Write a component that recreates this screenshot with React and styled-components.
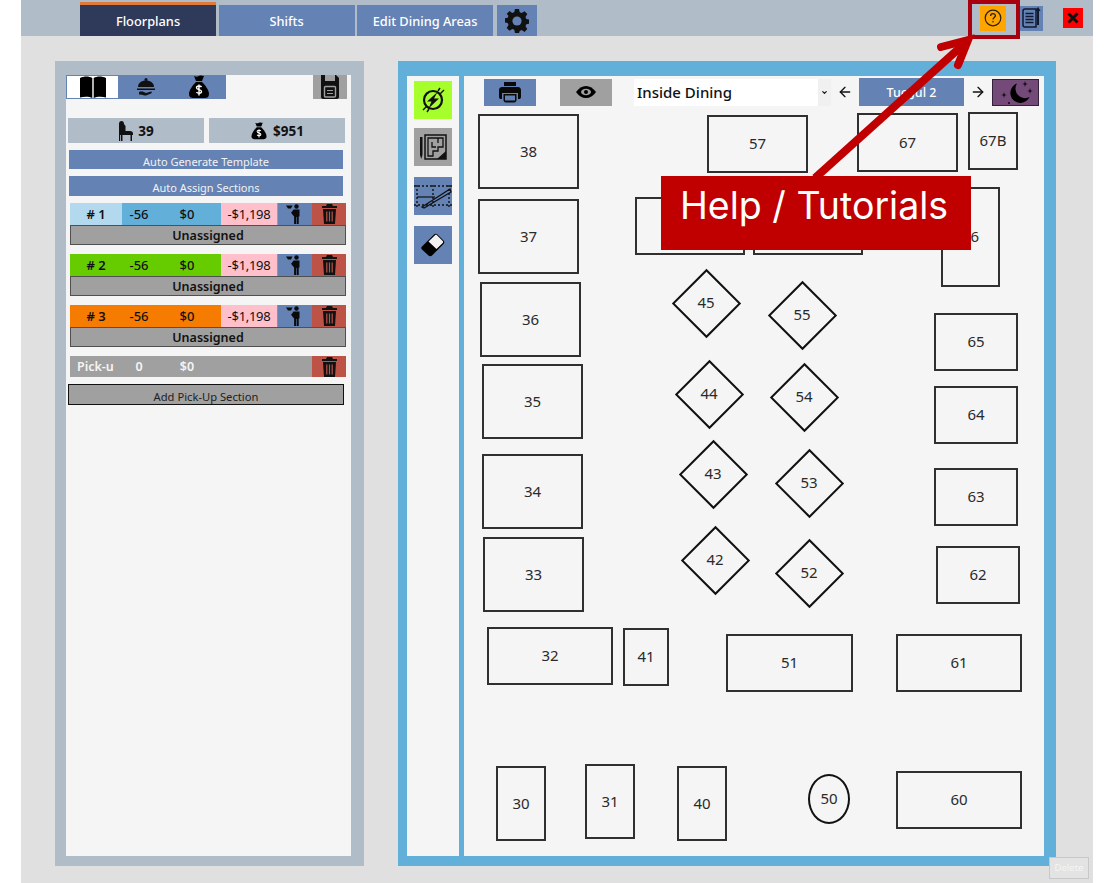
import styled, { createGlobalStyle } from "styled-components";
import { ArrowLeft, ArrowRight, ChevronDown } from "lucide-react";

const GlobalStyle = createGlobalStyle`
    html, body { margin: 0; background: #ffffff; }
    body { font-family: "Noto Sans", "Open Sans", sans-serif; }
`;

const rectTables = [
    { n: "38", x: 14, y: 38, w: 101, h: 75 },
    { n: "37", x: 14, y: 123, w: 101, h: 75 },
    { n: "36", x: 16, y: 206, w: 101, h: 75 },
    { n: "35", x: 18, y: 288, w: 101, h: 75 },
    { n: "34", x: 18, y: 378, w: 101, h: 75 },
    { n: "33", x: 19, y: 461, w: 101, h: 75 },
    { n: "32", x: 23, y: 551, w: 126, h: 58 },
    { n: "41", x: 159, y: 552, w: 46, h: 58 },
    { n: "57", x: 243, y: 39, w: 101, h: 58 },
    { n: "67", x: 393, y: 37, w: 101, h: 59 },
    { n: "67B", x: 504, y: 36, w: 50, h: 58 },
    { n: "", x: 171, y: 121, w: 110, h: 58 },
    { n: "", x: 289, y: 121, w: 110, h: 58 },
    { n: "66", x: 477, y: 111, w: 59, h: 100 },
    { n: "65", x: 470, y: 237, w: 84, h: 58 },
    { n: "64", x: 470, y: 310, w: 84, h: 58 },
    { n: "63", x: 470, y: 392, w: 84, h: 58 },
    { n: "62", x: 472, y: 470, w: 84, h: 58 },
    { n: "61", x: 432, y: 558, w: 126, h: 58 },
    { n: "60", x: 432, y: 695, w: 126, h: 58 },
    { n: "51", x: 262, y: 558, w: 127, h: 58 },
    { n: "30", x: 32, y: 690, w: 50, h: 75 },
    { n: "31", x: 121, y: 688, w: 50, h: 75 },
    { n: "40", x: 213, y: 690, w: 50, h: 75 },
];

const diamonds = [
    { n: "45", x: 242, y: 227 },
    { n: "55", x: 338, y: 239 },
    { n: "44", x: 245, y: 318 },
    { n: "54", x: 340, y: 321 },
    { n: "43", x: 249, y: 398 },
    { n: "53", x: 345, y: 407 },
    { n: "42", x: 251, y: 484 },
    { n: "52", x: 345, y: 497 },
];

const sections = [
    { n: "# 1", tag: "#b3d9ee", bg: "#62afd9" },
    { n: "# 2", tag: "#66cc00", bg: "#66cc00" },
    { n: "# 3", tag: "#f57c00", bg: "#f57c00" },
];

function Book() {
    return (
        <svg width="26" height="22" viewBox="0 0 26 22">
            <path d="M0 2c4-2 9-2 12.300 0v20c-3-1.500-8-1.500-12.300-.5zM13.700 2c3.300-2 8.300-2 12.300 0v19.500c-4-1-9-1-12.300.5z" fill="#000" />
        </svg>
    );
}

function Cloche() {
    return (
        <svg width="20" height="20" viewBox="0 0 20 20">
            <circle cx="10" cy="2.500" r="1.500" fill="#111" />
            <path d="M2 10c0-4 3.500-6.500 8-6.500s8 2.500 8 6.500z" fill="#111" />
            <path d="M1 11.500h18v1.500H1z" fill="#111" />
            <path d="M3 15c3-1 5 0 7 1l5-1.500c1 0 1 1.500 0 2L10 18.500c-3 0-4-1.500-7-1z" fill="#111" />
        </svg>
    );
}

function MoneyBag({ size = 24 }) {
    return (
        <svg width={size} height={size} viewBox="0 0 24 24">
            <path d="M7 1c2 1 3 1 5 0s3 0 5 0l-2 5H9z" fill="#000" />
            <path d="M9 7h6c3 3 7 8 7 12 0 3-2 4-4 4H6c-2 0-4-1-4-4 0-4 4-9 7-12z" fill="#000" />
            <path d="M14.500 12c-1-1.500-5-1.500-5 .8 0 2.500 5 1.200 5 3.700 0 2.200-4 2.200-5 .5M12 9.500v11" fill="none" stroke="#fff" strokeWidth="1.400" />
        </svg>
    );
}

function Floppy() {
    return (
        <svg width="18" height="24" viewBox="0 0 18 24">
            <path d="M0 0h4v6h10V0h1l3 3v19c0 1-1 2-2 2H2c-1 0-2-1-2-2z" fill="#111" />
            <rect x="3.500" y="11.500" width="11" height="10.500" rx="1" fill="none" stroke="#a0a0a0" strokeWidth="1.400" />
            <path d="M6 15.500h6M6 18.500h6" stroke="#a0a0a0" strokeWidth="1.200" />
        </svg>
    );
}

function Chair() {
    return (
        <svg width="15" height="20" viewBox="0 0 15 20">
            <path d="M1 3c0-2 1-3 2.500-3C5 0 6 1 6 3l1.500 2v5H12c2 0 3 1 3 2.500V14h-1v6h-1.500v-6h-8v6H3v-6H2.200v6H1z" fill="#111" />
        </svg>
    );
}

function Waiter() {
    return (
        <svg width="18" height="20" viewBox="0 0 18 20">
            <circle cx="10.500" cy="2.500" r="2.200" fill="#0a0a0a" />
            <path d="M7.500 5.500h6v7h-.8V20h-2v-7h-.6v7h-2v-7.500L5 8.800l1-1z" fill="#0a0a0a" />
            <path d="M0 1.500h6.500L5 4.500H2z" fill="#0a0a0a" />
        </svg>
    );
}

function Trash() {
    return (
        <svg width="15" height="20" viewBox="0 0 15 20">
            <path d="M5 0h5l1 2h4v2H0V2h4z" fill="#111" />
            <path d="M1 5h13l-1 15H2z" fill="#111" />
            <path d="M4.800 7.500v10M7.500 7.500v10M10.200 7.500v10" stroke="#b9534a" strokeWidth="1.200" />
        </svg>
    );
}

function Gear() {
    return (
        <svg width="24" height="26" viewBox="0 0 24 24">
            <path
                d="M10 0h4l.7 3.300 2 .8L19.500 2.300l2.800 2.800-1.800 2.800.8 2 3.300.7v4l-3.300.7-.8 2 1.800 2.800-2.800 2.800-2.800-1.800-2 .8L14 24h-4l-.7-3.300-2-.8-2.800 1.800-2.800-2.800 1.800-2.800-.8-2L-.6 13.400v-4l3.300-.7.8-2L1.700 4.900l2.800-2.800 2.800 1.800 2-.8z"
                fill="#111"
            />
            <circle cx="12" cy="12" r="4.600" fill="#6482b4" />
        </svg>
    );
}

function Bolt() {
    return (
        <svg width="26" height="28" viewBox="0 0 26 28">
            <circle cx="13" cy="14" r="9" fill="none" stroke="#111" strokeWidth="2.200" />
            <path d="M17.500 6L7 15.500h4.500L8.500 22.500l10.500-10h-5z" fill="#111" />
            <path d="M3 24l3.500-3.500M20 8l4-4M20 2l-2 3M7 26l2-3" stroke="#111" strokeWidth="1.400" />
        </svg>
    );
}

function PlanIcon() {
    return (
        <svg width="32" height="32" viewBox="0 0 32 32">
            <path d="M3 6h2.500v18L4.200 28 3 24z" fill="#111" />
            <path d="M8 4h21v24H8z" fill="none" stroke="#111" strokeWidth="1.500" />
            <path d="M11 7h15v9h-5v4h-5v5h-5zM15 11v5h4M21 7v5" fill="none" stroke="#111" strokeWidth="1.300" />
            <path d="M20 28l9-8v8z" fill="#111" />
        </svg>
    );
}

function DrawIcon() {
    return (
        <svg width="38" height="38" viewBox="0 0 38 38" fill="none">
            <path d="M0 9h38M0 28h38M3 8v22M19 8v22M35 8v22" stroke="#111" strokeWidth="1.400" strokeDasharray="2 2" />
            <path d="M3 20h18" stroke="#111" strokeWidth="1.200" />
            <path d="M8 30L36 12l1 3L10 31z" fill="none" stroke="#111" strokeWidth="1.300" />
        </svg>
    );
}

function Eraser() {
    return (
        <svg width="24" height="24" viewBox="0 0 24 24">
            <path d="M1 13.500L13 1.500c1-1 2.500-1 3.500 0l6 6c1 1 1 2.500 0 3.500L11 22.500c-1 1-2.500 1-3.500 0L1 16.500c-1-1-1-2 0-3z" fill="#000" />
            <path d="M7.500 8.500L14 2.300c.7-.6 1.500-.6 2 0l5.700 5.700c.6.6.6 1.300 0 2L15.500 16z" fill="#f2f2f2" />
        </svg>
    );
}

function Printer() {
    return (
        <svg width="22" height="22" viewBox="0 0 22 22">
            <path d="M5 1h12v4H5z" fill="#0a0a0a" />
            <path d="M3 6h16c1.500 0 3 1 3 3v7c0 1.500-1 2-2 2h-1v-6H3v6H2c-1 0-2-.5-2-2V9c0-2 1.500-3 3-3z" fill="#0a0a0a" />
            <path d="M4.500 13h13v6c0 1.500-1 2.500-2.500 2.500H7c-1.500 0-2.500-1-2.500-2.500z" fill="#0a0a0a" />
            <path d="M6 14.500h10v5H6z" fill="#6482b4" />
        </svg>
    );
}

function Eye() {
    return (
        <svg width="20" height="12" viewBox="0 0 20 12">
            <path d="M0 6c3-4 6-6 10-6s7 2 10 6c-3 4-6 6-10 6S3 10 0 6z" fill="#000" />
            <ellipse cx="10" cy="6" rx="5" ry="3.300" fill="#a0a0a0" />
            <circle cx="10" cy="6" r="2" fill="#000" />
        </svg>
    );
}

function Moon() {
    return (
        <svg width="45" height="25" viewBox="0 0 45 25">
            <path d="M24 3.500A10 10 0 1 0 36.500 17 A9.500 9.500 0 0 1 24 3.500z" fill="#000" />
            <path d="M32 1l.6 2.400 2.400.6-2.400.6L32 7l-.6-2.400L29 4l2.400-.6zM37 8l.6 2.400 2.400.6-2.400.6L37 14l-.6-2.400-2.400-.6 2.400-.6zM11 12l.6 2.400 2.400.6-2.400.6L11 18l-.6-2.400L8 15l2.400-.6z" fill="#000" />
            <circle cx="16" cy="23" r=".9" fill="#000" />
        </svg>
    );
}

function Help() {
    return (
        <svg width="18" height="18" viewBox="0 0 18 18" fill="none">
            <circle cx="9" cy="9" r="7.800" stroke="#2a2010" strokeWidth="1.200" />
            <path d="M6.600 7c0-3 4.800-3 4.800-.2 0 1.800-2.400 1.800-2.400 3.700" stroke="#2a2010" strokeWidth="1.300" />
            <circle cx="9" cy="12.800" r=".8" fill="#2a2010" />
        </svg>
    );
}

function Notes() {
    return (
        <svg width="20" height="22" viewBox="0 0 20 22" fill="none">
            <path d="M1 4c0-1 1-2 2-2h11v18H3c-1 0-2-1-2-2z" fill="#6482b4" stroke="#111a30" strokeWidth="1.500" />
            <path d="M3.500 6.500h8M3.500 9.500h8M3.500 12.500h8M3.500 15.500h8" stroke="#111a30" strokeWidth="1.400" />
            <path d="M16 2v16" stroke="#111a30" strokeWidth="2" />
            <path d="M14 4l2-3 2 3" stroke="#111a30" strokeWidth="1.200" />
        </svg>
    );
}

function CloseX() {
    return (
        <svg width="12" height="12" viewBox="0 0 12 12">
            <path d="M1.500 1.500l9 9M10.500 1.500l-9 9" stroke="#111" strokeWidth="3" />
        </svg>
    );
}

export default function App() {
    return (
        <>
            <GlobalStyle />
            <Frame>
                <TopBar>
                    <Tab $active>Floorplans</Tab>
                    <Tab>Shifts</Tab>
                    <Tab>Edit Dining Areas</Tab>
                    <GearTab><Gear /></GearTab>
                    <TopRight>
                        <HelpButton><Help /></HelpButton>
                        <NotesButton><Notes /></NotesButton>
                        <CloseButton><CloseX /></CloseButton>
                    </TopRight>
                </TopBar>

                <Body>
                    <LeftPanel>
                        <LeftInner>
                            <IconTabs>
                                <IconTabGroup>
                                    <BookTab><Book /></BookTab>
                                    <PlainTab><Cloche /></PlainTab>
                                    <PlainTab><MoneyBag /></PlainTab>
                                </IconTabGroup>
                                <SaveButton><Floppy /></SaveButton>
                            </IconTabs>

                            <Stats>
                                <Stat><Chair /> 39</Stat>
                                <Stat><MoneyBag size={18} /> $951</Stat>
                            </Stats>

                            <WideButton>Auto Generate Template</WideButton>
                            <WideButton>Auto Assign Sections</WideButton>

                            {sections.map((s) => (
                                <Section key={s.n}>
                                    <SectionRow $bg={s.bg}>
                                        <SectionTag $bg={s.tag}>{s.n}</SectionTag>
                                        <SectionNum $w={34}>-56</SectionNum>
                                        <SectionNum $w={62}>$0</SectionNum>
                                        <Loss>-$1,198</Loss>
                                        <WaiterButton><Waiter /></WaiterButton>
                                        <TrashButton><Trash /></TrashButton>
                                    </SectionRow>
                                    <Unassigned>Unassigned</Unassigned>
                                </Section>
                            ))}

                            <PickupRow>
                                <PickupName>Pick-u</PickupName>
                                <PickupCell $w={34}>0</PickupCell>
                                <PickupCell $w={62}>$0</PickupCell>
                                <PickupSpacer />
                                <TrashButton><Trash /></TrashButton>
                            </PickupRow>
                            <AddPickup>Add Pick-Up Section</AddPickup>
                        </LeftInner>
                    </LeftPanel>

                    <RightPanel>
                        <ToolColumn>
                            <ToolButton $bg="#a6ff2a"><Bolt /></ToolButton>
                            <ToolButton $bg="#a0a0a0"><PlanIcon /></ToolButton>
                            <ToolButton $bg="#6482b4"><DrawIcon /></ToolButton>
                            <ToolButton $bg="#6482b4"><Eraser /></ToolButton>
                        </ToolColumn>
                        <Canvas>
                            <CanvasBar>
                                <BarButton $bg="#6482b4"><Printer /></BarButton>
                                <BarButton $bg="#a0a0a0" $ml={24}><Eye /></BarButton>
                                <Select>
                                    Inside Dining
                                    <SelectArrow><ChevronDown size={7} strokeWidth={4} /></SelectArrow>
                                </Select>
                                <Arrow><ArrowLeft size={16} /></Arrow>
                                <DateButton>Tue Jul 2</DateButton>
                                <Arrow><ArrowRight size={16} /></Arrow>
                                <NightButton><Moon /></NightButton>
                            </CanvasBar>

                            {rectTables.map((t, i) => (
                                <Table key={i} style={{ left: t.x, top: t.y, width: t.w, height: t.h }}>{t.n}</Table>
                            ))}
                            {diamonds.map((d) => (
                                <DiamondWrap key={d.n} style={{ left: d.x - 35, top: d.y - 35 }}>
                                    <Diamond />
                                    <DiamondLabel>{d.n}</DiamondLabel>
                                </DiamondWrap>
                            ))}
                            <RoundTable>50</RoundTable>
                        </Canvas>
                    </RightPanel>
                </Body>

                <DeleteButton>Delete</DeleteButton>

                <Callout>Help / Tutorials</Callout>
                <HelpBox />
                <ArrowOverlay width="1114" height="883" viewBox="0 0 1114 883">
                    <path d="M815 178L964 44" stroke="#c00000" strokeWidth="8" fill="none" />
                    <path d="M941 47L968 40 958 65" stroke="#c00000" strokeWidth="8" fill="none" strokeLinecap="round" />
                </ArrowOverlay>
            </Frame>
        </>
    );
}

const Frame = styled.div`
    position: relative;
    width: 1072px;
    height: 883px;
    margin-left: 21px;
    background: #e0e0e0;
    overflow: visible;
`;

const TopBar = styled.div`
    height: 36px;
    background: #b0bcc8;
    display: flex;
    align-items: flex-end;
    gap: 2.500px;
    padding-left: 59px;
    box-sizing: border-box;
`;

const Tab = styled.div`
    width: 136px;
    height: ${(p) => (p.$active ? "34px" : "31px")};
    padding-top: ${(p) => (p.$active ? "0" : "1px")};
    box-sizing: border-box;
    background: ${(p) => (p.$active ? "#2f3a5a" : "#6482b4")};
    border-top: ${(p) => (p.$active ? "3px solid #e07a3a" : "none")};
    color: #ffffff;
    font-size: 12.800px;
    font-weight: 500;
    display: flex;
    align-items: center;
    justify-content: center;
`;

const GearTab = styled.div`
    width: 40px;
    height: 31px;
    margin-left: 1px;
    background: #6482b4;
    display: flex;
    align-items: center;
    justify-content: center;
`;

const TopRight = styled.div`
    margin-left: auto;
    align-self: center;
    display: flex;
    align-items: center;
    padding-right: 10px;
    height: 36px;
`;

const HelpButton = styled.div`
    width: 26px;
    height: 25px;
    background: #ffa500;
    display: flex;
    align-items: center;
    justify-content: center;
`;

const NotesButton = styled.div`
    width: 23px;
    height: 25px;
    margin-left: 14px;
    background: #6482b4;
    display: flex;
    align-items: center;
    justify-content: center;
`;

const CloseButton = styled.div`
    width: 20px;
    height: 20px;
    margin-left: 20px;
    background: #ff0000;
    display: flex;
    align-items: center;
    justify-content: center;
`;

const Body = styled.div`
    display: flex;
    gap: 34px;
    padding: 25px 0 0 34px;
`;

const LeftPanel = styled.div`
    width: 309px;
    height: 805px;
    box-sizing: border-box;
    background: #b0bcc8;
    padding: 14px 13px 10px 11px;
`;

const LeftInner = styled.div`
    height: 100%;
    background: #f5f5f5;
    display: flex;
    flex-direction: column;
    align-items: flex-start;
`;

const IconTabs = styled.div`
    width: 100%;
    height: 25px;
    display: flex;
    justify-content: space-between;
`;

const IconTabGroup = styled.div`
    display: flex;
    background: #6482b4;
    height: 24px;
    width: 160px;
`;

const BookTab = styled.div`
    width: 53px;
    height: 24px;
    box-sizing: border-box;
    background: #ffffff;
    border: 1px solid #6482b4;
    display: flex;
    justify-content: center;
    overflow: hidden;
`;

const PlainTab = styled.div`
    width: 53px;
    display: flex;
    align-items: center;
    justify-content: center;
`;

const SaveButton = styled.div`
    width: 34px;
    height: 24px;
    background: #a0a0a0;
    display: flex;
    justify-content: center;
    overflow: hidden;
    margin-right: 4px;
`;

const Stats = styled.div`
    display: flex;
    gap: 5px;
    margin: 18px 0 0 2px;
`;

const Stat = styled.div`
    width: 136px;
    height: 25px;
    background: #b0bcc8;
    color: #111111;
    font-size: 13.500px;
    font-weight: 700;
    display: flex;
    align-items: center;
    justify-content: center;
    gap: 5px;
`;

const WideButton = styled.div`
    width: 274px;
    height: 19px;
    margin: 7px 0 0 3px;
    background: #6482b4;
    color: #f2f2f2;
    font-size: 11px;
    line-height: 24px;
    text-align: center;
    overflow: hidden;
    & + & {
        height: 20px;
    }
`;

const Section = styled.div`
    width: 276px;
    margin: 7px 0 0 4px;
    & + & {
        margin-top: 9px;
    }
`;

const SectionRow = styled.div`
    display: flex;
    height: 22px;
    background: ${(p) => p.$bg};
    color: #111111;
    font-size: 13px;
    align-items: stretch;
`;

const SectionTag = styled.div`
    width: 52px;
    background: ${(p) => p.$bg};
    font-weight: 600;
    display: flex;
    align-items: center;
    justify-content: center;
`;

const SectionNum = styled.div`
    width: ${(p) => p.$w}px;
    font-weight: 500;
    display: flex;
    align-items: center;
    justify-content: center;
`;

const Loss = styled.div`
    width: 56px;
    margin-left: 3px;
    background: #ffc0cb;
    letter-spacing: -0.3px;
    display: flex;
    align-items: center;
    justify-content: center;
`;

const WaiterButton = styled.div`
    width: 34px;
    margin-left: 1px;
    background: #6482b4;
    display: flex;
    align-items: center;
    justify-content: center;
`;

const TrashButton = styled.div`
    width: 34px;
    background: #bd5247;
    display: flex;
    align-items: center;
    justify-content: center;
`;

const Unassigned = styled.div`
    height: 20px;
    box-sizing: border-box;
    background: #a0a0a0;
    border: 1px solid #505050;
    color: #111111;
    font-size: 12.500px;
    font-weight: 600;
    line-height: 19px;
    text-align: center;
`;

const PickupRow = styled.div`
    display: flex;
    width: 276px;
    height: 21px;
    margin: 9px 0 0 4px;
    background: #a0a0a0;
    color: #f5f5f5;
    font-size: 12.500px;
    font-weight: 600;
`;

const PickupName = styled.div`
    width: 52px;
    padding-left: 7px;
    box-sizing: border-box;
    line-height: 21px;
    overflow: hidden;
`;

const PickupCell = styled.div`
    width: ${(p) => p.$w}px;
    display: flex;
    align-items: center;
    justify-content: center;
    overflow: hidden;
`;

const PickupSpacer = styled.div`
    flex: 1;
`;

const AddPickup = styled.div`
    width: 276px;
    height: 21px;
    box-sizing: border-box;
    margin: 7px 0 0 2px;
    background: #a0a0a0;
    border: 1px solid #111111;
    color: #202020;
    font-size: 11.200px;
    line-height: 24px;
    text-align: center;
    overflow: hidden;
`;

const RightPanel = styled.div`
    width: 658px;
    height: 805px;
    box-sizing: border-box;
    background: #62afd9;
    padding: 15px 12px 10px 9px;
    display: flex;
    gap: 5px;
`;

const ToolColumn = styled.div`
    width: 52px;
    background: #f5f5f5;
    display: flex;
    flex-direction: column;
    align-items: center;
    gap: 11px;
    padding-top: 5px;
`;

const ToolButton = styled.div`
    width: 38px;
    height: 38px;
    background: ${(p) => p.$bg};
    display: flex;
    align-items: center;
    justify-content: center;
    overflow: hidden;
    &:first-child {
        margin-bottom: -2px;
    }
`;

const Canvas = styled.div`
    position: relative;
    flex: 1;
    background: #f5f5f5;
`;

const CanvasBar = styled.div`
    display: flex;
    align-items: center;
    height: 28px;
    padding: 2px 0 0 20px;
`;

const BarButton = styled.div`
    width: 52px;
    height: 27px;
    margin-left: ${(p) => p.$ml || 0}px;
    background: ${(p) => p.$bg};
    display: flex;
    align-items: center;
    justify-content: center;
`;

const Select = styled.div`
    position: relative;
    width: 197px;
    height: 27px;
    margin-left: 22px;
    padding-left: 3px;
    box-sizing: border-box;
    background: #ffffff;
    color: #111111;
    font-size: 15px;
    font-weight: 500;
    line-height: 27px;
`;

const SelectArrow = styled.div`
    position: absolute;
    right: 0;
    top: 0;
    width: 13px;
    height: 27px;
    background: #f0f0f0;
    display: flex;
    align-items: center;
    justify-content: center;
`;

const Arrow = styled.div`
    width: 28px;
    display: flex;
    align-items: center;
    justify-content: center;
    color: #111111;
`;

const DateButton = styled.div`
    width: 105px;
    height: 28px;
    background: #6482b4;
    color: #ffffff;
    font-size: 12.500px;
    font-weight: 500;
    display: flex;
    align-items: center;
    justify-content: center;
`;

const NightButton = styled.div`
    width: 47px;
    height: 27px;
    box-sizing: border-box;
    background: #744a78;
    border: 1px solid #33203a;
    display: flex;
    align-items: center;
    justify-content: center;
    overflow: hidden;
`;

const Table = styled.div`
    position: absolute;
    box-sizing: border-box;
    border: 2px solid #303030;
    background: #f5f5f5;
    color: #2a2a2a;
    font-size: 15px;
    padding-bottom: 2px;
    display: flex;
    align-items: center;
    justify-content: center;
`;

const DiamondWrap = styled.div`
    position: absolute;
    width: 70px;
    height: 70px;
    padding-bottom: 2px;
    box-sizing: border-box;
    display: flex;
    align-items: center;
    justify-content: center;
`;

const Diamond = styled.div`
    position: absolute;
    top: 10.500px;
    left: 10.500px;
    width: 49px;
    height: 49px;
    box-sizing: border-box;
    border: 2px solid #111111;
    transform: rotate(45deg);
`;

const DiamondLabel = styled.span`
    position: relative;
    color: #2a2a2a;
    font-size: 15px;
`;

const RoundTable = styled.div`
    position: absolute;
    left: 344px;
    top: 698px;
    width: 42px;
    height: 50px;
    padding-bottom: 2px;
    box-sizing: border-box;
    border: 2px solid #111111;
    border-radius: 50%;
    color: #2a2a2a;
    font-size: 15px;
    display: flex;
    align-items: center;
    justify-content: center;
`;

const DeleteButton = styled.div`
    position: absolute;
    right: 4px;
    bottom: 4px;
    width: 40px;
    height: 22px;
    box-sizing: border-box;
    background: #e3e3e3;
    border: 1px solid #c8c8c8;
    color: #f5f5f5;
    font-size: 9.500px;
    line-height: 20px;
    text-align: center;
`;

const Callout = styled.div`
    position: absolute;
    left: 640px;
    top: 176px;
    width: 310px;
    height: 74px;
    background: #c00000;
    color: #ffffff;
    font-family: "Inter", sans-serif;
    font-size: 37.500px;
    line-height: 60px;
    padding-left: 19px;
    box-sizing: border-box;
`;

const HelpBox = styled.div`
    position: absolute;
    left: 947px;
    top: 0;
    width: 52px;
    height: 39px;
    box-sizing: border-box;
    border: 4px solid #a8000f;
`;

const ArrowOverlay = styled.svg`
    position: absolute;
    left: -21px;
    top: 0;
    pointer-events: none;
`;
